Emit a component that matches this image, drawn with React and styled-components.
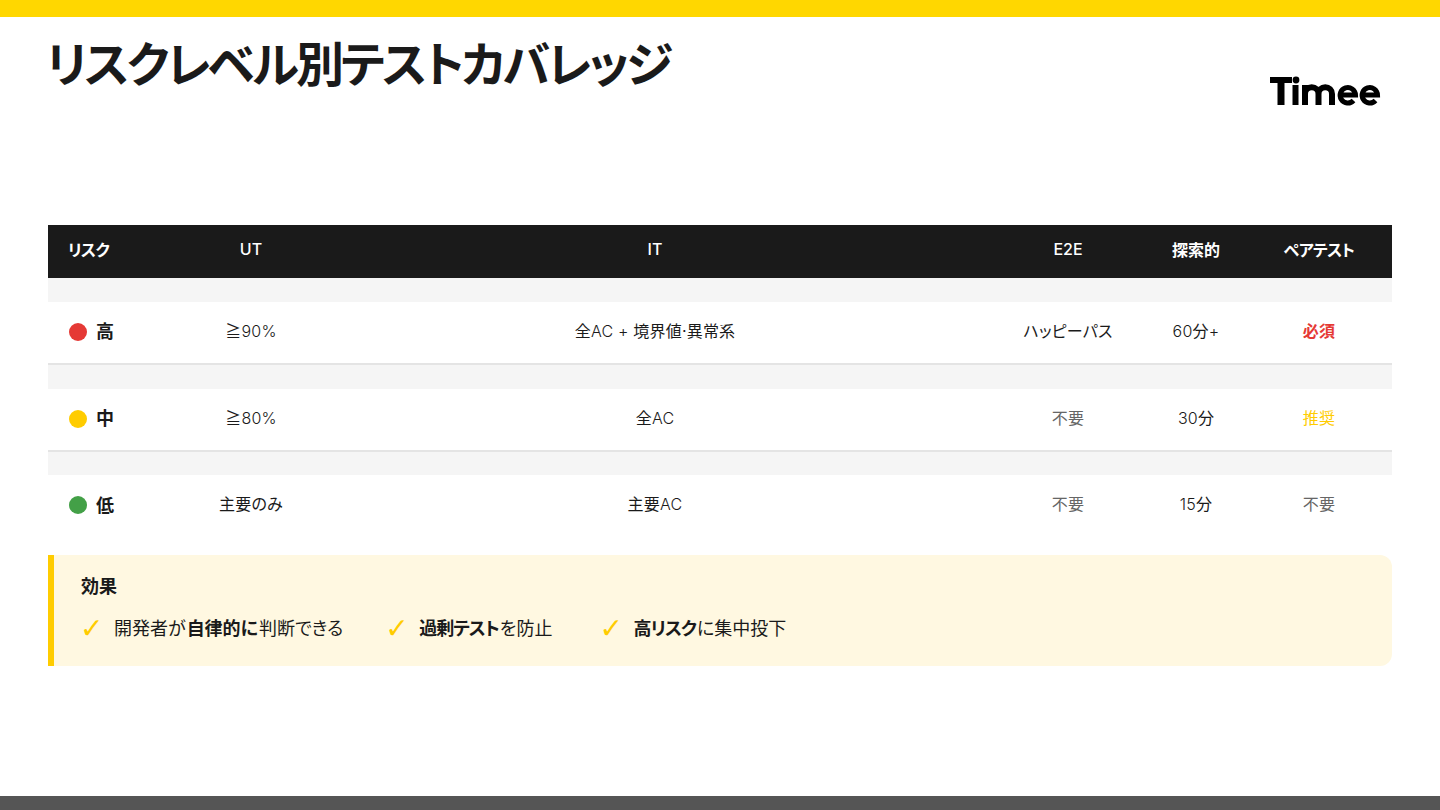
import React from "react";
import styled, { createGlobalStyle } from "styled-components";

const Global = createGlobalStyle`
  html, body { margin: 0; padding: 0; background: #fff; }
  body { font-family: Inter, "Noto Sans CJK JP", sans-serif; color: #1a1a1a; font-feature-settings: "palt" 1; }
`;
const Slide = styled.div`
  width: 1440px; height: 810px; display: flex; flex-direction: column; overflow: hidden; background: #fff;
`;
const TopBar = styled.div`height: 17px; background: #ffd700; flex: none;`;
const BottomBar = styled.div`height: 14px; background: #555; flex: none;`;
const Main = styled.div`flex: 1; padding: 0 48px; display: flex; flex-direction: column;`;
const Header = styled.header`height: 208px; display: flex; justify-content: space-between; align-items: flex-start; flex: none;`;
const Title = styled.h1`
  margin: 20px 0 0 -2px; font-size: 48px; line-height: 56px; font-weight: 700; letter-spacing: -3.05px; color: #1a1a1a;
`;
const LogoMark = styled.svg`
  width: 112px; height: 31px; margin: 59px 10px 0 0; flex: none; display: block;
`;
const Table = styled.table`
  width: 1344px; border-collapse: collapse; table-layout: fixed; font-size: 16px;
`;
const Col = styled.col`width: ${p => p.$w}px;`;
const Th = styled.th`
  box-sizing: border-box; background: #1a1a1a; color: #fff; height: 53px; padding: 0 0 5px; font-size: 16px;
  font-weight: ${p => p.$latin ? 500 : 700};
  letter-spacing: ${p => p.$kana ? "-0.7px" : "0"};
  text-align: ${p => p.$left ? "left" : "center"};
  padding-left: ${p => p.$left ? "20px" : "0"};
`;
const Spacer = styled.tr`height: ${p => p.$h}px; background: #f5f5f5;`;
const Row = styled.tr`height: 62px; background: #fff; border-bottom: ${p => p.$last ? "none" : "2px solid #e4e4e4"};`;
const Td = styled.td`
  box-sizing: border-box; padding: 0 0 ${p => p.$pb}px; text-align: center; font-size: 16px; letter-spacing: 0.2px;
  color: ${p => p.$c || "#1a1a1a"}; font-weight: ${p => p.$b ? 700 : 400};
`;
const Latin = styled.span`font-weight: 300;`;
const RiskCell = styled.div`display: flex; align-items: center; gap: 9px; padding-left: 21px; font-size: 18px; font-weight: 700; letter-spacing: 0;`;
const Dot = styled.span`width: 18px; height: 18px; border-radius: 50%; background: ${p => p.$c}; flex: none; margin-top: 3px;`;
const Callout = styled.section`
  margin-top: 18px; height: 111px; box-sizing: border-box; background: #fff8e1; border-left: 6px solid #ffcc00;
  border-radius: 0 12px 12px 0; padding: 20px 27px;
`;
const CalloutTitle = styled.div`font-size: 18px; line-height: 24px; font-weight: 700;`;
const Items = styled.div`display: flex; gap: 43px; margin-top: 17px;`;
const Item = styled.div`
  display: flex; align-items: center; font-size: 18px; line-height: 26px; font-weight: 400; white-space: pre;
  margin-left: ${p => p.$shift || 0}px;
`;
const Check = styled.span`color: #ffcc00; font-size: 28px; line-height: 26px; width: 34px; margin-left: -1px; flex: none; font-family: "DejaVu Sans", sans-serif; font-weight: 400;`;
const Strong = styled.strong`font-weight: 700; margin: 0 1px 0 ${p => p.$tight ? 0 : 1}px; letter-spacing: ${p => p.$tight ? "-1px" : "0"};`;

const Mixed = ({ text }) =>
  text.split(/([0-9A-Z%+ ]+)/).map((part, i) =>
    i % 2 ? <Latin key={i}>{part}</Latin> : part
  );

const rows = [
  { r: "高", c: "#e53935", ut: "≧90%", it: "全AC + 境界値·異常系", e2e: "ハッピーパス", ex: "60分+", pair: "必須", pc: "#e53935", pb: true, h: 24 },
  { r: "中", c: "#ffcc00", ut: "≧80%", it: "全AC", e2e: "不要", eg: true, ex: "30分", pair: "推奨", pc: "#ffcc00", h: 25 },
  { r: "低", c: "#43a047", ut: "主要のみ", it: "主要AC", e2e: "不要", eg: true, ex: "15分", pair: "不要", pc: "#666", h: 24 },
];

export default function App() {
  return (
    <Slide>
      <Global />
      <TopBar />
      <Main>
        <Header>
          <Title>リスクレベル別テストカバレッジ</Title>
          <LogoMark viewBox="0 0 112 31" role="img" aria-label="Timee">
            <g fill="#000">
              <rect x="0" y="1" width="22" height="6" />
              <rect x="7.5" y="1" width="7" height="28" />
              <rect x="22.5" y="9" width="6" height="20" />
              <circle cx="26" cy="4" r="3.4" />
            </g>
            <g fill="none" stroke="#000" strokeWidth="6">
              <path d="M35 29 V9 M35 18 a6.75 6.75 0 0 1 13.5 0 V29 M48.5 18 a6.75 6.75 0 0 1 13.5 0 V29" />
            </g>
            <g fill="none" stroke="#000" strokeWidth="5">
              <path d="M71 19 H85.5 A7.7 7.7 0 1 0 83.5 24.5" />
              <path d="M93 19 H107.5 A7.7 7.7 0 1 0 105.5 24.5" />
            </g>
          </LogoMark>
        </Header>
        <Table>
          <colgroup>
            <Col $w={134} /><Col $w={138} /><Col $w={670} /><Col $w={156} /><Col $w={100} /><Col $w={146} />
          </colgroup>
          <thead>
            <tr>
              <Th $left $kana>リスク</Th><Th $latin>UT</Th><Th $latin>IT</Th><Th $latin>E2E</Th><Th>探索的</Th><Th $kana>ペアテスト</Th>
            </tr>
          </thead>
          <tbody>
            {rows.map((x, i) => {
              const pb = i === 2 ? 7 : 5;
              return (
                <React.Fragment key={x.r}>
                  <Spacer $h={x.h}><td colSpan={6} /></Spacer>
                  <Row $last={i === 2}>
                    <Td $pb={5}><RiskCell><Dot $c={x.c} />{x.r}</RiskCell></Td>
                    <Td $pb={pb}><Mixed text={x.ut} /></Td>
                    <Td $pb={pb}><Mixed text={x.it} /></Td>
                    <Td $pb={pb} $c={x.eg ? "#666" : undefined}>{x.e2e}</Td>
                    <Td $pb={pb}><Mixed text={x.ex} /></Td>
                    <Td $pb={pb} $c={x.pc} $b={x.pb}>{x.pair}</Td>
                  </Row>
                </React.Fragment>
              );
            })}
          </tbody>
        </Table>
        <Callout>
          <CalloutTitle>効果</CalloutTitle>
          <Items>
            <Item><Check>✓</Check>開発者が<Strong>自律的に</Strong>判断できる</Item>
            <Item><Check>✓</Check><Strong $tight>過剰テスト</Strong>を防止</Item>
            <Item $shift={5}><Check>✓</Check><Strong $tight>高リスク</Strong>に集中投下</Item>
          </Items>
        </Callout>
      </Main>
      <BottomBar />
    </Slide>
  );
}
